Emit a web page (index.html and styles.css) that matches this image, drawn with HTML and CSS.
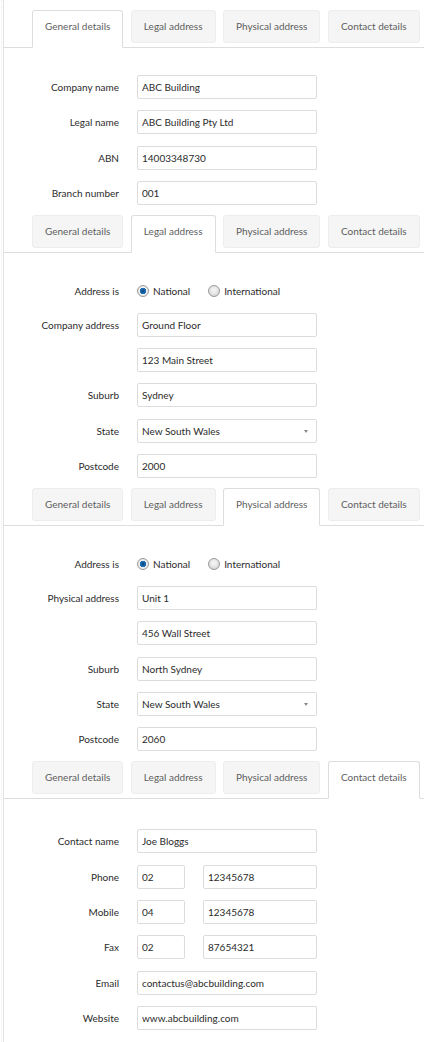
FILE: index.html
```html
<!DOCTYPE html>
<html lang="en">
<head>
<meta charset="utf-8">
<title>Company details</title>
<link rel="stylesheet" href="styles.css">
</head>
<body>
<div class="page">

  <section class="panel">
    <nav class="tabs">
      <a class="tab active">General details</a>
      <a class="tab">Legal address</a>
      <a class="tab">Physical address</a>
      <a class="tab">Contact details</a>
    </nav>
    <div class="form">
      <div class="row"><label>Company name</label><input class="field" value="ABC Building"></div>
      <div class="row"><label>Legal name</label><input class="field" value="ABC Building Pty Ltd"></div>
      <div class="row"><label>ABN</label><input class="field" value="14003348730"></div>
      <div class="row"><label>Branch number</label><input class="field" value="001"></div>
    </div>
  </section>

  <section class="panel">
    <nav class="tabs">
      <a class="tab">General details</a>
      <a class="tab active">Legal address</a>
      <a class="tab">Physical address</a>
      <a class="tab">Contact details</a>
    </nav>
    <div class="form">
      <div class="row radio-row"><label>Address is</label>
        <div class="radios">
          <span class="option"><input type="radio" class="radio" name="legal" checked>National</span>
          <span class="option"><input type="radio" class="radio" name="legal">International</span>
        </div>
      </div>
      <div class="row"><label>Company address</label><input class="field" value="Ground Floor"></div>
      <div class="row"><label></label><input class="field" value="123 Main Street"></div>
      <div class="row"><label>Suburb</label><input class="field" value="Sydney"></div>
      <div class="row"><label>State</label><div class="select field">New South Wales</div></div>
      <div class="row"><label>Postcode</label><input class="field" value="2000"></div>
    </div>
  </section>

  <section class="panel">
    <nav class="tabs">
      <a class="tab">General details</a>
      <a class="tab">Legal address</a>
      <a class="tab active">Physical address</a>
      <a class="tab">Contact details</a>
    </nav>
    <div class="form">
      <div class="row radio-row"><label>Address is</label>
        <div class="radios">
          <span class="option"><input type="radio" class="radio" name="phys" checked>National</span>
          <span class="option"><input type="radio" class="radio" name="phys">International</span>
        </div>
      </div>
      <div class="row"><label>Physical address</label><input class="field" value="Unit 1"></div>
      <div class="row"><label></label><input class="field" value="456 Wall Street"></div>
      <div class="row"><label>Suburb</label><input class="field" value="North Sydney"></div>
      <div class="row"><label>State</label><div class="select field">New South Wales</div></div>
      <div class="row"><label>Postcode</label><input class="field" value="2060"></div>
    </div>
  </section>

  <section class="panel">
    <nav class="tabs">
      <a class="tab">General details</a>
      <a class="tab">Legal address</a>
      <a class="tab">Physical address</a>
      <a class="tab active">Contact details</a>
    </nav>
    <div class="form contact">
      <div class="row"><label>Contact name</label><input class="field" value="Joe Bloggs"></div>
      <div class="row"><label>Phone</label><div class="pair"><input class="field short" value="02"><input class="field long" value="12345678"></div></div>
      <div class="row"><label>Mobile</label><div class="pair"><input class="field short" value="04"><input class="field long" value="12345678"></div></div>
      <div class="row"><label>Fax</label><div class="pair"><input class="field short" value="02"><input class="field long" value="87654321"></div></div>
      <div class="row"><label>Email</label><input class="field" value="contactus@abcbuilding.com"></div>
      <div class="row"><label>Website</label><input class="field" value="www.abcbuilding.com"></div>
    </div>
  </section>

</div>
</body>
</html>
```

FILE: styles.css
```css
html, body {
  margin: 0;
  padding: 0;
  background: #fff;
}

body {
  font-family: Lato, "Open Sans", "DejaVu Sans", sans-serif;
  font-size: 10px;
  color: #2b2b2b;
}

.page {
  position: relative;
  margin-left: 3px;
  border-left: 1px solid #e3e3e3;
  padding-top: 10px;
  min-height: 1042px;
  box-sizing: border-box;
}

.page::before {
  content: "";
  position: absolute;
  top: 0;
  bottom: 0;
  left: -3px;
  border-left: 1px dotted #ececec;
}

.tabs {
  display: flex;
  align-items: flex-start;
  gap: 7.5px;
  height: 37px;
  padding-left: 28px;
  border-bottom: 1px solid #ddd;
}

.tab {
  box-sizing: border-box;
  height: 33px;
  padding: 0 12px;
  line-height: 31px;
  text-align: center;
  background: #f5f5f5;
  border: 1px solid #ededed;
  border-radius: 3px;
  color: #5e5e5e;
  white-space: nowrap;
}

.tab.active {
  height: 38px;
  background: #fff;
  border-color: #ddd;
  border-bottom-color: #fff;
  border-radius: 3px 3px 0 0;
}

.form {
  display: flex;
  flex-direction: column;
  gap: 11.33px;
  padding: 27px 0 10px;
}

.form.contact {
  padding-top: 30px;
}

.row {
  display: grid;
  grid-template-columns: 115px 180px;
  column-gap: 18px;
  align-items: center;
}

.row label {
  text-align: right;
  color: #2b2b2b;
}

.field {
  box-sizing: border-box;
  width: 180px;
  height: 24px;
  margin: 0;
  padding: 0 4px;
  border: 1px solid #dcdcdc;
  border-radius: 2px;
  background: #fff;
  font: inherit;
  color: #2b2b2b;
  outline: none;
}

.select {
  position: relative;
  display: flex;
  align-items: center;
}

.select::after {
  content: "";
  position: absolute;
  right: 8px;
  top: 10px;
  border-left: 2.5px solid transparent;
  border-right: 2.5px solid transparent;
  border-top: 3.5px solid #888;
}

.pair {
  display: flex;
  gap: 18px;
}

.field.short {
  width: 48px;
}

.field.long {
  width: 114px;
}

.radio-row {
  height: 21.5px;
}

.radios {
  display: flex;
  align-items: center;
  gap: 18px;
}

.option {
  display: flex;
  align-items: center;
  gap: 4px;
}

.radio {
  appearance: none;
  -webkit-appearance: none;
  box-sizing: border-box;
  width: 12px;
  height: 12px;
  margin: 0;
  border: 1px solid #9a9a9a;
  border-radius: 50%;
  background: radial-gradient(circle at 50% 40%, #f8f8f8 0%, #e2e2e2 55%, #c8c8c8 100%);
}

.radio:checked {
  background: radial-gradient(circle, #0b3f70 0%, #1c6fb8 35%, #1e6ab0 42%, #f0f0f0 48%, #dcdcdc 100%);
}
```
